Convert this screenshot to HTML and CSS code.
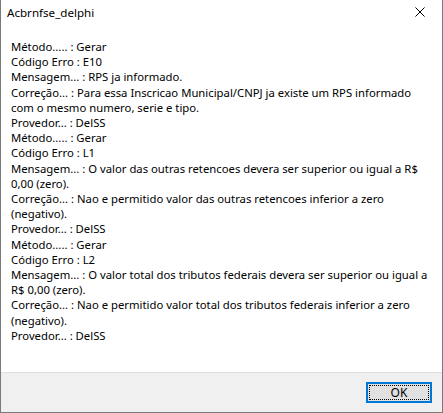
FILE: index.html
```html
<!DOCTYPE html>
<html lang="pt">
  <head>
    <meta charset="UTF-8" />
    <title>Acbrnfse_delphi</title>
    <link rel="stylesheet" href="styles.css">
  </head>
  <body>
    <div class="dialog">
      <header class="title-bar">
        <span class="title">Acbrnfse_delphi</span>
        <button class="close-btn" aria-label="Fechar">
          <svg width="10" height="10" viewBox="0 0 10 10">
            <path d="M0.5 0.5 L9.5 9.5 M9.5 0.5 L0.5 9.5" stroke="#000" stroke-width="1" fill="none" />
          </svg>
        </button>
      </header>

      <main class="message">
        <div class="line">Método..... : Gerar</div>
        <div class="line">Código Erro : E10</div>
        <div class="line">Mensagem... : RPS ja informado.</div>
        <div class="line">Correção... : Para essa Inscricao Municipal/CNPJ ja existe um RPS informado</div>
        <div class="line">com o mesmo numero, serie e tipo.</div>
        <div class="line">Provedor... : DelSS</div>
        <div class="line">Método..... : Gerar</div>
        <div class="line">Código Erro : L1</div>
        <div class="line">Mensagem... : O valor das outras retencoes devera ser superior ou igual a R$</div>
        <div class="line">0,00 (zero).</div>
        <div class="line">Correção... : Nao e permitido valor das outras retencoes inferior a zero</div>
        <div class="line">(negativo).</div>
        <div class="line">Provedor... : DelSS</div>
        <div class="line">Método..... : Gerar</div>
        <div class="line">Código Erro : L2</div>
        <div class="line">Mensagem... : O valor total dos tributos federais devera ser superior ou igual a</div>
        <div class="line">R$ 0,00 (zero).</div>
        <div class="line">Correção... : Nao e permitido valor total dos tributos federais inferior a zero</div>
        <div class="line">(negativo).</div>
        <div class="line">Provedor... : DelSS</div>
      </main>

      <footer class="button-bar">
        <button class="ok-btn"><span class="focus">OK</span></button>
      </footer>
    </div>
  </body>
</html>
```

FILE: styles.css
```css
/* General Styles */
body {
  margin: 0;
  padding: 0;
  font-family: "Noto Sans", "Liberation Sans", sans-serif;
  font-size: 11.3px;
  color: #000;
  background-color: #fff;
}

.dialog {
  width: 443px;
  height: 413px;
  box-sizing: border-box;
  display: flex;
  flex-direction: column;
  border: 1px solid #7a7a7a;
  border-top: none;
  background-color: #fff;
}

/* Title Bar */
.title-bar {
  height: 30px;
  display: flex;
  align-items: center;
  justify-content: space-between;
  padding-left: 6px;
}

.title {
  font-size: 11.6px;
  line-height: 16px;
  margin-top: -5px;
}

.close-btn {
  width: 46px;
  height: 30px;
  border: none;
  background: none;
  padding: 0;
  display: flex;
  align-items: center;
  justify-content: center;
  margin-top: -6px;
  margin-right: -1px;
}

/* Message */
.message {
  flex: 1;
  padding: 9px 10px 0 10px;
}

.line {
  white-space: nowrap;
  line-height: 15.2px;
}

/* Button Bar */
.button-bar {
  height: 40px;
  background-color: #f0f0f0;
  border-top: 1px solid #dfdfdf;
  display: flex;
  align-items: flex-start;
  justify-content: flex-end;
  padding: 9px 10px 0 0;
  box-sizing: border-box;
}

.ok-btn {
  width: 66px;
  height: 21px;
  box-sizing: border-box;
  border: 2px solid #0078d7;
  background-color: #e1e1e1;
  padding: 1px;
  font-family: inherit;
  font-size: 12px;
  color: #000;
  display: flex;
}

.ok-btn .focus {
  flex: 1;
  border: 1px dotted #000;
  display: flex;
  align-items: center;
  justify-content: center;
  line-height: 12px;
}
```
